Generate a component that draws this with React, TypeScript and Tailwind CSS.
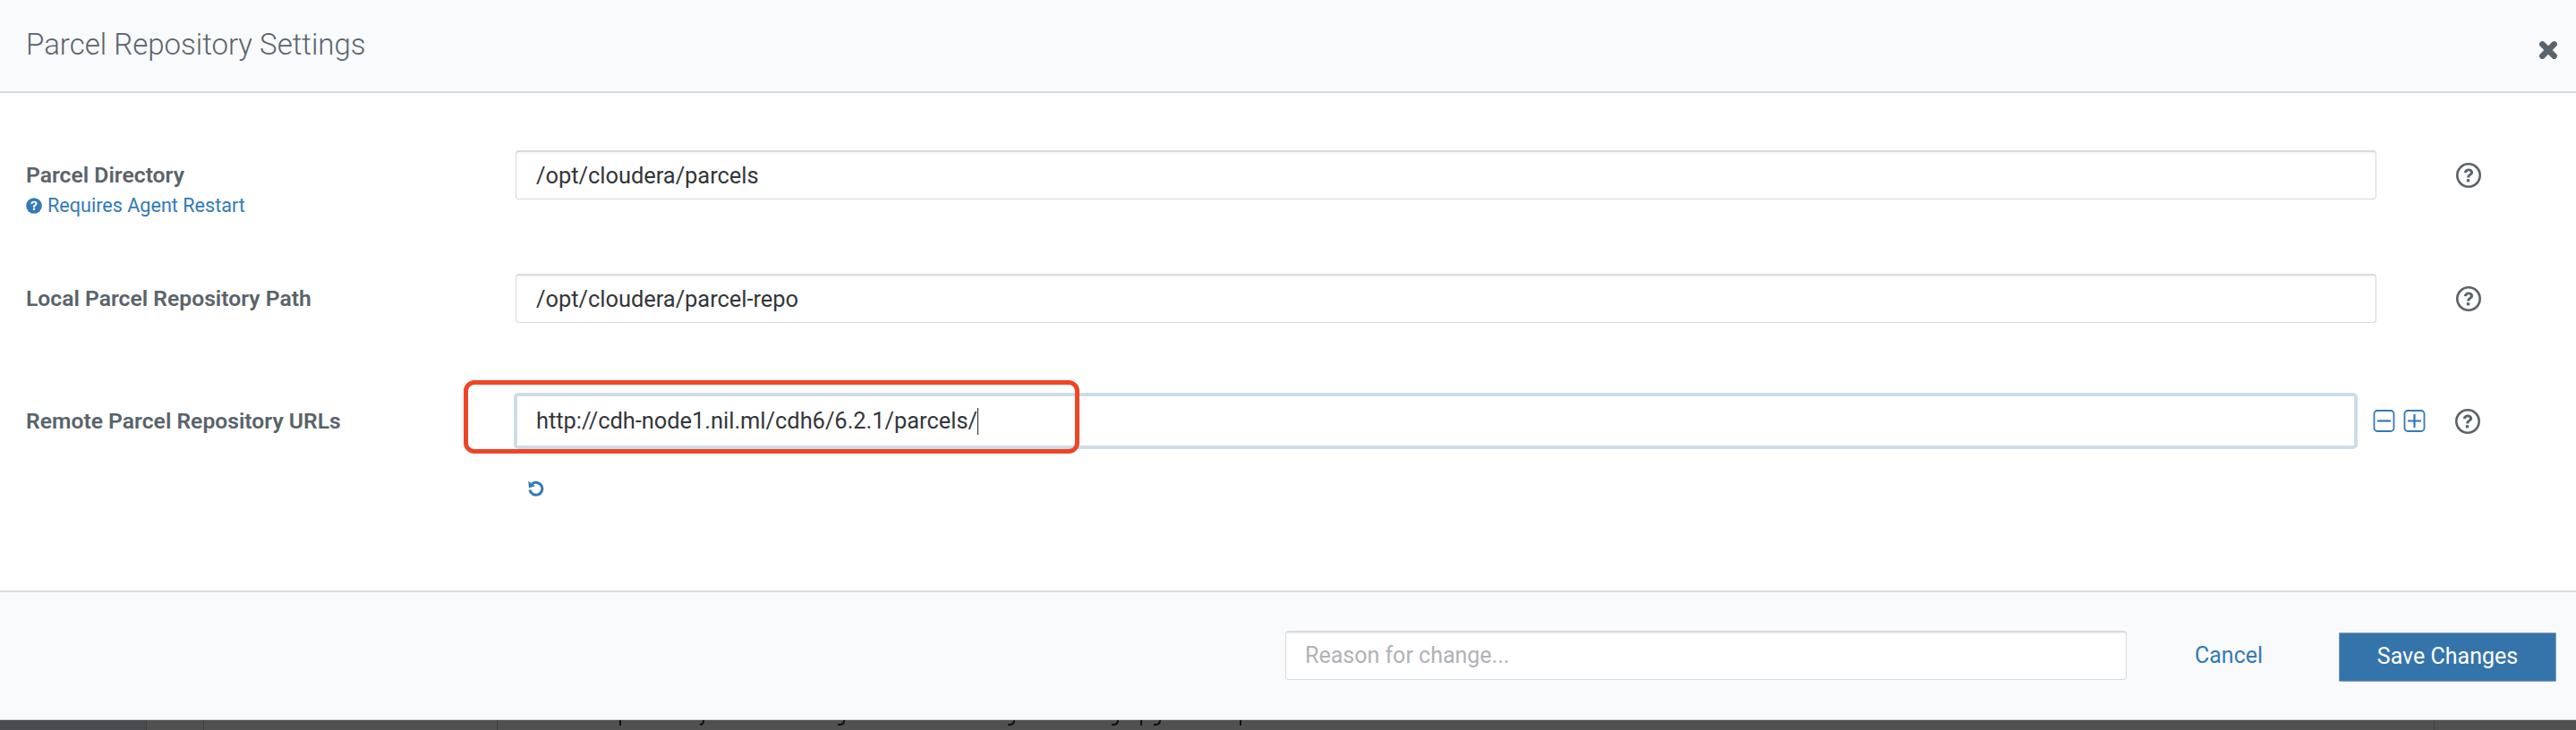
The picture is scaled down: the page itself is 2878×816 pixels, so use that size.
import React from 'react';

const HelpIcon = () => (
  <svg viewBox="0 0 28 28" className="w-[28px] h-[28px] text-[#59636b]">
    <circle cx="14" cy="14" r="12.7" fill="none" stroke="currentColor" strokeWidth="2.6" />
    <path d="M8.9 11c.2-3 2.3-4.5 5.2-4.5 3 0 5 1.7 5 4.1 0 1.9-1 2.8-2.4 3.7-1.1.7-1.4 1.1-1.4 2.3h-3c-.1-2 .6-3 1.9-3.8 1.1-.7 1.7-1.1 1.7-2 0-1-.8-1.6-1.8-1.6-1.2 0-2 .7-2.1 2z" fill="currentColor" />
    <rect x="11.9" y="18.2" width="3.3" height="3.2" fill="currentColor" />
  </svg>
);

const MiniCircleHelp = () => (
  <svg viewBox="0 0 18 18" className="w-[18px] h-[18px] text-[#337ab7]">
    <circle cx="9" cy="9" r="8.8" fill="currentColor" />
    <path d="M5.4 6.9c.1-2 1.6-3.2 3.6-3.2 2.1 0 3.6 1.2 3.6 2.9 0 1.3-.8 2-1.7 2.6-.6.4-.9.7-.9 1.5H7.9c-.1-1.4.4-2 1.2-2.6.7-.5 1.2-.8 1.2-1.4 0-.6-.5-1.1-1.3-1.1-.9 0-1.4.5-1.5 1.3z" fill="white" />
    <rect x="7.9" y="11.6" width="2.2" height="2.3" fill="white" />
  </svg>
);

const FieldLabel = ({ children }: { children: React.ReactNode }) => (
  <div className="text-[24.7px] leading-[30px] font-semibold text-[#59636b] whitespace-nowrap">{children}</div>
);

const TextField = ({ value }: { value: string }) => (
  <div className="flex-1 h-[55px] flex items-center pl-[22px] bg-white border border-[#d9d9de] border-t-2 rounded-[4px] text-[25.4px] text-[#33363a] shadow-[inset_0_2px_2px_rgba(0,0,0,0.04)]">
    {value}
  </div>
);

export default function App() {
  return (
    <div className="w-[2878px] h-[816px] flex flex-col bg-white overflow-hidden font-['Roboto',sans-serif]">
      {/* header */}
      <div className="relative h-[104px] shrink-0 bg-[#f9fafc] border-b-2 border-[#d9d9de] pl-[29px] pt-[28px]">
        <h1 className="text-[33px] leading-[44px] font-light text-[#59636b]">Parcel Repository Settings</h1>
        <svg viewBox="0 0 20 20" className="absolute left-[2836px] top-[45px] w-[22px] h-[22px] text-[#59636b]" fill="none" stroke="currentColor" strokeWidth="6" strokeLinecap="round">
          <path d="M4 4l12 12M16 4L4 16" />
        </svg>
      </div>

      {/* form */}
      <div className="flex-1 flex flex-col pt-[64px] pl-[29px] pr-[105px]">
        <div className="flex h-[55px] items-center">
          <div className="w-[547px] relative">
            <FieldLabel>Parcel Directory</FieldLabel>
            <div className="absolute top-[36px] left-0 flex items-center gap-[6px] text-[21.6px] leading-[26px] text-[#337ab7] whitespace-nowrap">
              <MiniCircleHelp />
              Requires Agent Restart
            </div>
          </div>
          <TextField value="/opt/cloudera/parcels" />
          <div className="w-[118px] shrink-0 flex justify-end"><div className="mr-[1px]"><HelpIcon /></div></div>
        </div>

        <div className="flex h-[57px] items-center mt-[82px]">
          <div className="w-[547px]"><FieldLabel>Local Parcel Repository Path</FieldLabel></div>
          <TextField value="/opt/cloudera/parcel-repo" />
          <div className="w-[118px] shrink-0 flex justify-end"><div className="mr-[1px]"><HelpIcon /></div></div>
        </div>

        <div className="flex h-[63px] items-center mt-[77px]">
          <div className="w-[545px]"><FieldLabel>Remote Parcel Repository URLs</FieldLabel></div>
          <div className="relative flex-1 h-[63px] flex items-center pl-[21px] bg-white border-[4px] border-[#cddde8] rounded-[5px] text-[25.4px] text-[#33363a]">
            http://cdh-node1.nil.ml/cdh6/6.2.1/parcels/
            <span className="w-[1px] h-[30px] bg-[#222]" />
            <div className="absolute left-[-60px] top-[-18px] w-[688px] h-[82px] border-[5px] border-[#ee4527] rounded-[12px]" />
          </div>
          <div className="w-[139px] shrink-0 flex items-center">
            <div className="ml-[17px] flex gap-[9px]">
              <svg viewBox="0 0 24 25" className="w-[25px] h-[25px] text-[#337ab7]" fill="none" stroke="currentColor" strokeWidth="1.8">
                <rect x="1" y="1" width="22" height="23" rx="3.5" />
                <path d="M4.5 12.5h15" strokeWidth="2.2" />
              </svg>
              <svg viewBox="0 0 24 25" className="w-[25px] h-[25px] text-[#337ab7]" fill="none" stroke="currentColor" strokeWidth="1.8">
                <rect x="1" y="1" width="22" height="23" rx="3.5" />
                <path d="M4.5 12.5h15M12 5v15" strokeWidth="2.2" />
              </svg>
            </div>
            <div className="ml-[33px]"><HelpIcon /></div>
          </div>
        </div>

        <div className="pl-[560px] mt-[34px]">
          <svg viewBox="0 0 20 20" className="w-[20px] h-[20px] text-[#337ab7]" fill="none" stroke="currentColor" strokeWidth="3">
            <path d="M5.5 4.8a7 7 0 1 1-2.6 6.6" />
            <path d="M1.2 1.8l.8 7.6 7-2.2z" fill="currentColor" stroke="none" />
          </svg>
        </div>
      </div>

      {/* footer */}
      <div className="h-[144px] shrink-0 bg-[#f9fafc] border-t-2 border-[#d9d9de] flex items-center pl-[1436px] pt-[2px]">
        <div className="w-[940px] h-[55px] flex items-center pl-[21px] bg-white border border-[#d9d9de] border-t-2 rounded-[4px] text-[25px] text-[#b0b2b6] mb-[4px] shadow-[inset_0_2px_2px_rgba(0,0,0,0.04)]">
          Reason for change...
        </div>
        <button className="ml-[76px] w-[75px] text-[25px] text-[#337ab7] whitespace-nowrap mb-[2px]">Cancel</button>
        <button className="ml-[86px] w-[243px] h-[55px] bg-[#3574ab] border border-[#8a9fb3] text-white text-[25px] rounded-[1px]">Save Changes</button>
      </div>

      {/* page behind the dialog */}
      <div className="relative h-[12px] shrink-0 bg-[#505050] border-t border-[#cfcfcf] flex">
        <div className="w-[164px] bg-[#4a4b4f] border-r border-[#3f3f3f]" />
        <div className="w-[64px] border-r border-[#3f3f3f]" />
        <div className="w-[328px] border-r border-[#3f3f3f]" />
        <div className="w-[2164px] border-r border-[#3f3f3f]" />
        {/* clipped descenders of the text under the dialog */}
        <svg viewBox="0 0 2878 11" className="absolute left-0 top-0 w-[2878px] h-[11px]" fill="none" stroke="#111" strokeWidth="2">
          <path d="M693 0v6M1275 0v6M1386 0v6" />
          <path d="M786 0c0 3-1 5-4 5M943 0c0 3-1 5-5 5h-2M1133 0c0 3-1 5-5 5h-2M1249 0c0 3-1 5-5 5h-2M1296 0c0 3-1 5-5 5h-2" />
        </svg>
      </div>
    </div>
  );
}
